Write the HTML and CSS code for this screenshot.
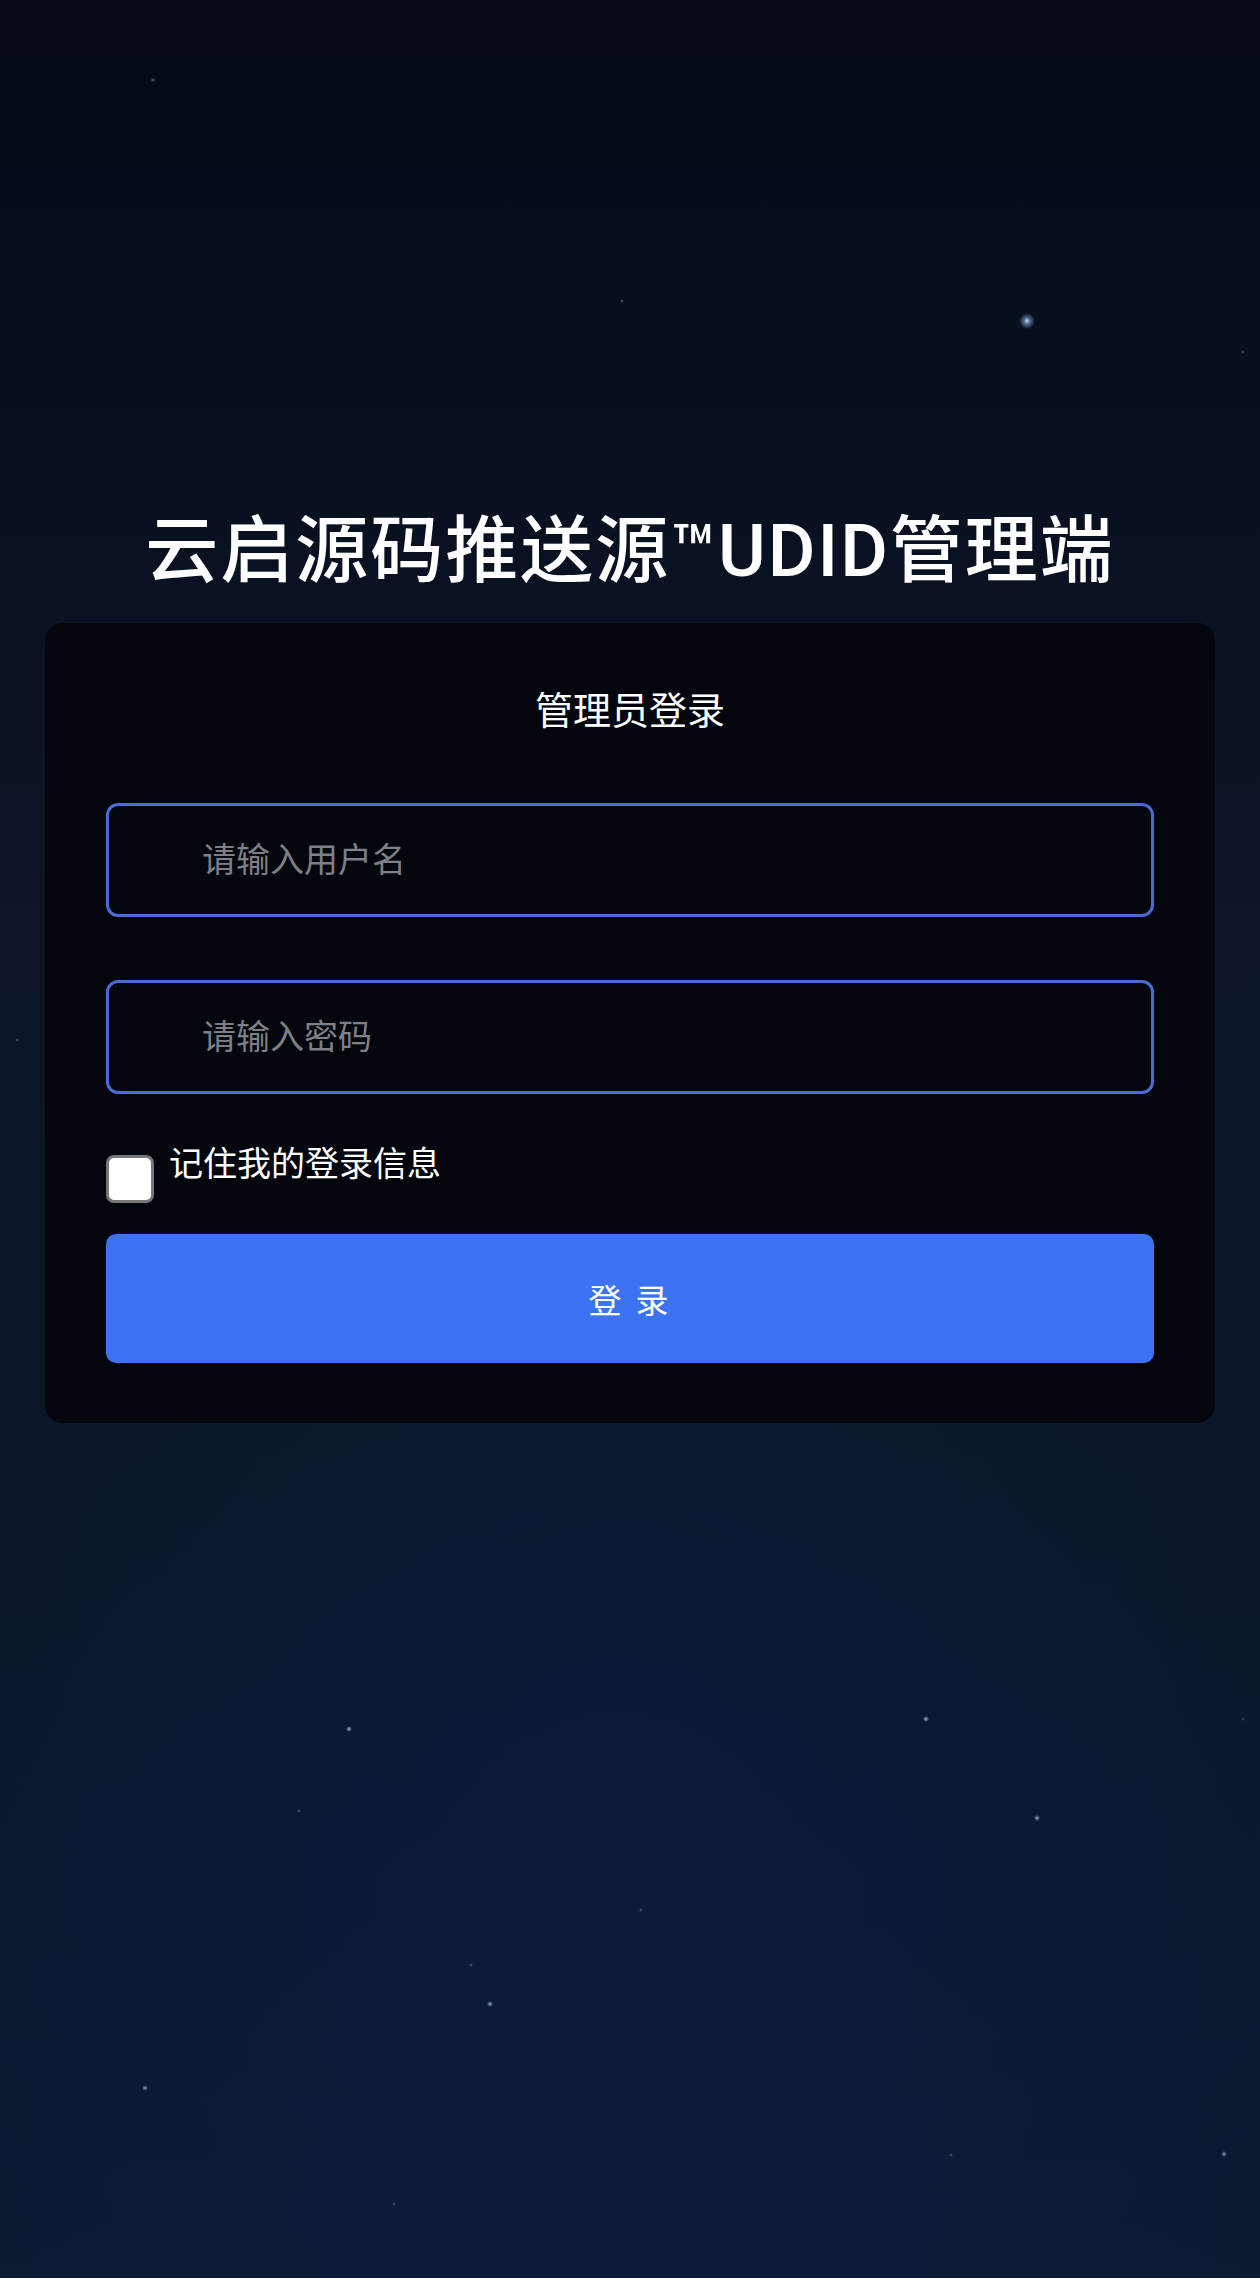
FILE: index.html
```html
<!DOCTYPE html>
<html lang="zh-CN">
<head>
<meta charset="utf-8">
<title>云启源码推送源™UDID管理端</title>
<link rel="stylesheet" href="styles.css">
</head>
<body>
<div class="page">
  <h1 class="site-title">云启源码推送源™UDID管理端</h1>
  <form class="login-card">
    <h2 class="card-title">管理员登录</h2>
    <input class="field" type="text" placeholder="请输入用户名">
    <input class="field field-pass" type="password" placeholder="请输入密码">
    <label class="remember">
      <input class="remember-box" type="checkbox">
      <span class="remember-text">记住我的登录信息</span>
    </label>
    <button class="submit" type="button">登 录</button>
  </form>
</div>
</body>
</html>
```

FILE: styles.css
```css
html, body {
  margin: 0;
  padding: 0;
}

body {
  font-family: Roboto, "Noto Sans CJK SC", "Noto Sans", sans-serif;
  color: #ffffff;
}

.page {
  min-height: 100vh;
  box-sizing: border-box;
  padding: 509px 45px 0;
  display: flex;
  flex-direction: column;
  background:
    radial-gradient(circle at 1027px 321px, rgba(200,230,255,0.95) 0, rgba(140,190,240,0.55) 3px, rgba(80,140,220,0) 8px),
    radial-gradient(circle at 153px 80px, rgba(150,170,200,0.5) 0, rgba(150,170,200,0) 2.5px),
    radial-gradient(circle at 622px 301px, rgba(150,180,210,0.5) 0, rgba(150,180,210,0) 2px),
    radial-gradient(circle at 1243px 352px, rgba(150,180,210,0.4) 0, rgba(150,180,210,0) 2px),
    radial-gradient(circle at 17px 1040px, rgba(150,180,210,0.4) 0, rgba(150,180,210,0) 2px),
    radial-gradient(circle at 349px 1729px, rgba(170,210,240,0.85) 0, rgba(170,210,240,0) 3px),
    radial-gradient(circle at 926px 1719px, rgba(170,210,240,0.85) 0, rgba(170,210,240,0) 3px),
    radial-gradient(circle at 1037px 1818px, rgba(170,210,240,0.8) 0, rgba(170,210,240,0) 3px),
    radial-gradient(circle at 490px 2004px, rgba(170,210,240,0.8) 0, rgba(170,210,240,0) 3px),
    radial-gradient(circle at 145px 2088px, rgba(170,210,240,0.7) 0, rgba(170,210,240,0) 3px),
    radial-gradient(circle at 1224px 2154px, rgba(170,210,240,0.7) 0, rgba(170,210,240,0) 3px),
    radial-gradient(circle at 299px 1811px, rgba(150,180,210,0.45) 0, rgba(150,180,210,0) 2px),
    radial-gradient(circle at 641px 1910px, rgba(150,180,210,0.45) 0, rgba(150,180,210,0) 2px),
    radial-gradient(circle at 471px 1965px, rgba(150,180,210,0.45) 0, rgba(150,180,210,0) 2px),
    radial-gradient(circle at 951px 2155px, rgba(150,180,210,0.4) 0, rgba(150,180,210,0) 2px),
    radial-gradient(circle at 394px 2204px, rgba(150,180,210,0.35) 0, rgba(150,180,210,0) 2px),
    radial-gradient(circle at 1243px 1719px, rgba(150,180,210,0.35) 0, rgba(150,180,210,0) 2px),
    radial-gradient(ellipse 700px 900px at 620px 1900px, rgba(16,32,70,0.45) 0, rgba(16,32,70,0) 100%),
    linear-gradient(180deg, #050a15 0%, #08101f 18%, #0b1527 40%, #0b1628 60%, #0b172e 80%, #0c1a32 100%);
}

.site-title {
  margin: 0;
  font-size: 73px;
  line-height: 85px;
  font-weight: 500;
  text-align: center;
  letter-spacing: 2px;
  color: #ffffff;
}

.login-card {
  margin-top: 29px;
  background: #03060d;
  border-radius: 18px;
  padding: 62px 61px 60px;
  display: flex;
  flex-direction: column;
}

.card-title {
  margin: 0;
  font-size: 38px;
  line-height: 52px;
  font-weight: 400;
  text-align: center;
  color: #ffffff;
}

.field {
  display: block;
  box-sizing: border-box;
  width: 100%;
  height: 114px;
  margin: 66px 0 0;
  padding: 0 20px 0 93px;
  border: 3px solid #4a6bd6;
  border-radius: 12px;
  background: transparent;
  color: #ffffff;
  font-family: Roboto, "Noto Sans CJK SC", sans-serif;
  font-size: 34px;
  outline: none;
}

.field-pass {
  margin-top: 63px;
}

.field::placeholder {
  color: #7d8086;
}

.remember {
  margin-top: 48px;
  display: flex;
  align-items: flex-start;
  gap: 15px;
  cursor: pointer;
}

.remember-box {
  appearance: none;
  -webkit-appearance: none;
  margin: 13px 0 0;
  width: 48px;
  height: 48px;
  box-sizing: border-box;
  flex: none;
  background: #ffffff;
  border: 3px solid #767676;
  border-radius: 8px;
}

.remember-text {
  font-size: 34px;
  line-height: 44px;
  color: #ffffff;
}

.submit {
  margin-top: 31px;
  height: 129px;
  border: none;
  border-radius: 10px;
  background: #3b73f3;
  color: #ffffff;
  font-family: Roboto, "Noto Sans CJK SC", sans-serif;
  font-size: 33px;
  letter-spacing: 3px;
  cursor: pointer;
}
```
